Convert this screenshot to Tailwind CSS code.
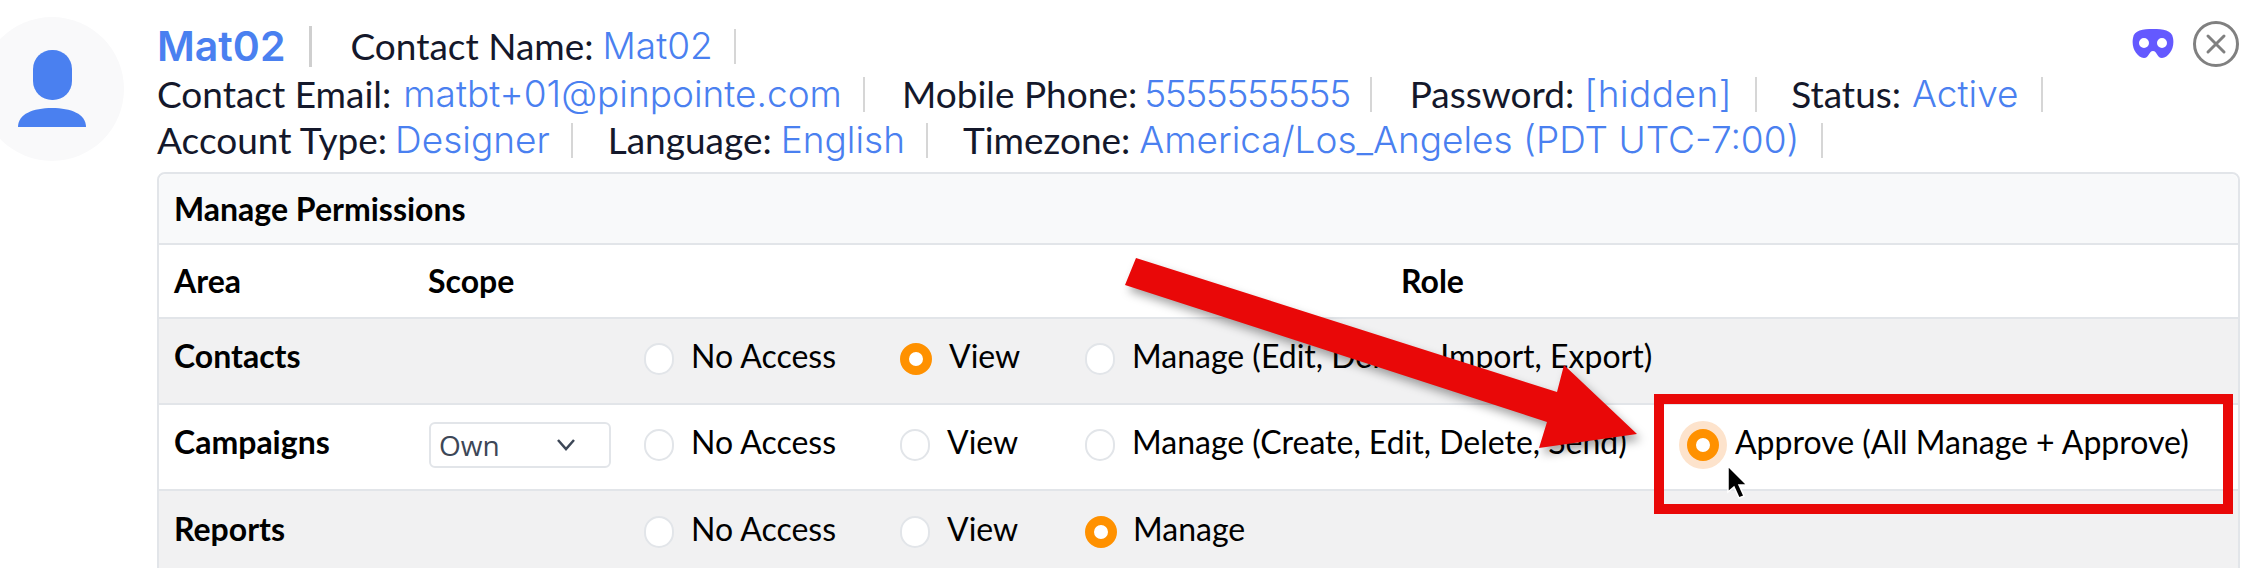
<!DOCTYPE html>
<html lang="en">
<head>
    <meta charset="UTF-8">
    <title>Manage Permissions</title>
    <script src="https://cdn.jsdelivr.net/npm/@tailwindcss/browser@4"></script>
</head>
<body class="relative w-[2254px] h-[568px] overflow-hidden bg-white font-['Lato',sans-serif] text-[#14182b]">
    <div class="flex">
        <!-- avatar -->
        <div class="w-[157px] shrink-0 relative">
            <div class="absolute left-[-20px] top-[17px] w-[144px] h-[144px] rounded-full bg-[#f9f9fa] flex items-center justify-center">
                <svg width="144" height="144" viewBox="0 0 144 144" fill="#4a80f0">
                    <rect x="53" y="33" width="39" height="50" rx="19"/>
                    <path d="M38 110c0-13 15-19 34-19s34 6 34 19z"/>
                </svg>
            </div>
        </div>

        <div class="w-[2083px]">
            <!-- contact details -->
            <div class="h-[172px] pt-[21px] text-[37px] leading-[46px]">
                <div class="flex items-center h-[50px]">
                    <span class="font-['Inter',sans-serif] font-semibold text-[41px] text-[#4a80f0]">Mat02</span>
                    <span class="w-[3px] h-[41px] bg-[#cfcfcf] ml-[24px] mr-[38px]"></span>
                    <span>Contact Name:</span>
                    <span class="ml-[9px] font-['Inter',sans-serif] font-light text-[#4a80f0]">Mat02</span>
                    <span class="w-[2px] h-[35px] bg-[#d6d6d6] ml-[21px]"></span>
                </div>
                <div class="flex items-center h-[46px]">
                    <span>Contact Email:</span>
                    <span class="ml-[12px] font-['Inter',sans-serif] font-light text-[#4a80f0]">matbt+01@pinpointe.com</span>
                    <span class="w-[2px] h-[35px] bg-[#d6d6d6] ml-[21px] mr-[37px]"></span>
                    <span>Mobile Phone:</span>
                    <span class="ml-[7px] font-['Inter',sans-serif] font-light tracking-[-1.4px] text-[#4a80f0]">5555555555</span>
                    <span class="w-[2px] h-[35px] bg-[#d6d6d6] ml-[20px] mr-[38px]"></span>
                    <span>Password:</span>
                    <span class="ml-[10px] font-['Inter',sans-serif] font-light tracking-[0.5px] text-[#4a80f0]">[hidden]</span>
                    <span class="w-[2px] h-[35px] bg-[#d6d6d6] ml-[23px] mr-[34px]"></span>
                    <span>Status:</span>
                    <span class="ml-[11px] font-['Inter',sans-serif] font-light text-[#4a80f0]">Active</span>
                    <span class="w-[2px] h-[35px] bg-[#d6d6d6] ml-[23px]"></span>
                </div>
                <div class="flex items-center h-[46px]">
                    <span>Account Type:</span>
                    <span class="ml-[8px] font-['Inter',sans-serif] font-light text-[#4a80f0]">Designer</span>
                    <span class="w-[2px] h-[35px] bg-[#d6d6d6] ml-[21px] mr-[35px]"></span>
                    <span>Language:</span>
                    <span class="ml-[9px] font-['Inter',sans-serif] font-light text-[#4a80f0]">English</span>
                    <span class="w-[2px] h-[35px] bg-[#d6d6d6] ml-[21px] mr-[35px]"></span>
                    <span>Timezone:</span>
                    <span class="ml-[9px] font-['Inter',sans-serif] font-light text-[#4a80f0]">America/Los_Angeles (PDT UTC-7:00)</span>
                    <span class="w-[2px] h-[35px] bg-[#d6d6d6] ml-[22px]"></span>
                </div>
            </div>

            <!-- permissions table -->
            <div class="border-2 border-[#e2e5e9] rounded-t-lg text-[32px] text-black">
                <div class="h-[71px] pl-[15px] flex items-center bg-[#f8f9fa] border-b-2 border-[#e2e5e9] rounded-t-lg font-bold">Manage Permissions</div>
                <div class="h-[74px] pl-[15px] flex items-center border-b-2 border-[#e2e5e9] font-bold">
                    <span class="w-[254px]">Area</span>
                    <span class="w-[199px]">Scope</span>
                    <span class="flex-1 text-center">Role</span>
                </div>

                <div class="h-[86px] pl-[15px] pb-[11px] flex items-center bg-[#f1f1f2] border-b-2 border-[#e2e5e9]">
                    <span class="w-[254px] font-bold">Contacts</span>
                    <span class="w-[216px]"></span>
                    <label class="w-[256px] flex items-center gap-[17px]"><span class="w-[30px] h-[32px] rounded-full bg-white border-2 border-[#e2e5e9] mt-[7px]"></span>No Access</label>
                    <label class="w-[185px] flex items-center gap-[17px]"><span class="w-[32px] h-[32px] rounded-full bg-white border-[9px] border-[#ff9100] mt-[7px]"></span>View</label>
                    <label class="flex items-center gap-[17px]"><span class="w-[30px] h-[32px] rounded-full bg-white border-2 border-[#e2e5e9] mt-[7px]"></span>Manage (Edit, Delete, Import, Export)</label>
                </div>

                <div class="h-[86px] pl-[15px] pb-[11px] flex items-center border-b-2 border-[#e2e5e9]">
                    <span class="w-[254px] font-bold">Campaigns</span>
                    <span class="w-[216px]">
                        <span class="w-[182px] h-[46px] mt-[7px] ml-[1px] pl-[8px] pr-[33px] flex items-center justify-between border-2 border-[#e2e5e9] rounded-md font-['Open_Sans',sans-serif] text-[28px] text-[#3d4757]">Own
                            <svg width="20" height="12" viewBox="0 0 20 12" fill="none" stroke="#3d4757" stroke-width="2.5"><path d="M2 1l8 9 8-9"/></svg>
                        </span>
                    </span>
                    <label class="w-[256px] flex items-center gap-[17px]"><span class="w-[30px] h-[32px] rounded-full bg-white border-2 border-[#e2e5e9] mt-[7px]"></span>No Access</label>
                    <label class="w-[185px] flex items-center gap-[17px]"><span class="w-[30px] h-[32px] rounded-full bg-white border-2 border-[#e2e5e9] mt-[7px]"></span>View</label>
                    <label class="w-[602px] flex items-center gap-[17px]"><span class="w-[30px] h-[32px] rounded-full bg-white border-2 border-[#e2e5e9] mt-[7px]"></span>Manage (Create, Edit, Delete, Send)</label>
                    <label class="flex items-center gap-[16px]"><span class="w-[32px] h-[32px] rounded-full bg-white border-[9px] border-[#ff9100] mt-[7px] shadow-[0_0_0_8px_#fde3cc]"></span>Approve (All Manage + Approve)</label>
                </div>

                <div class="h-[86px] pl-[15px] pb-[11px] flex items-center bg-[#f1f1f2]">
                    <span class="w-[254px] font-bold">Reports</span>
                    <span class="w-[216px]"></span>
                    <label class="w-[256px] flex items-center gap-[17px]"><span class="w-[30px] h-[32px] rounded-full bg-white border-2 border-[#e2e5e9] mt-[7px]"></span>No Access</label>
                    <label class="w-[185px] flex items-center gap-[17px]"><span class="w-[30px] h-[32px] rounded-full bg-white border-2 border-[#e2e5e9] mt-[7px]"></span>View</label>
                    <label class="flex items-center gap-[16px]"><span class="w-[32px] h-[32px] rounded-full bg-white border-[9px] border-[#ff9100] mt-[7px]"></span>Manage</label>
                </div>
            </div>
        </div>
    </div>

    <!-- mask + close icons -->
    <svg class="absolute left-[2132px] top-[29px]" width="42" height="29" viewBox="0 0 42 29" fill="#6459ff">
        <path fill-rule="evenodd" d="M21 0c10 0 19 1 20 9 2 10-4 19-11 20-5 0-5-7-9-7s-4 7-9 7C5 28-1 19 1 9 2 1 11 0 21 0zM12 9a5 5 0 1 0 0 10 5 5 0 0 0 0-10zm18 0a5 5 0 1 0 0 10 5 5 0 0 0 0-10z"/>
    </svg>
    <svg class="absolute left-[2192px] top-[20px]" width="48" height="48" viewBox="0 0 48 48" fill="none" stroke="#808080">
        <circle cx="24" cy="24" r="21.5" stroke-width="3"/>
        <path d="M16 16l16 16M32 16L16 32" stroke-width="3" stroke-linecap="round"/>
    </svg>

    <!-- annotation: arrow, box, cursor -->
    <svg class="absolute left-0 top-0 drop-shadow-[4px_6px_5px_rgba(0,0,0,0.35)]" width="2254" height="568" fill="#e90808">
        <polygon points="1136,258 1125,285 1547,422 1539,448 1637,434 1564,365 1557,392"/>
    </svg>
    <div class="absolute left-[1654px] top-[394px] w-[579px] h-[120px] border-[10px] border-[#e90808]"></div>
    <svg class="absolute left-[1726px] top-[464px]" width="24" height="36" viewBox="0 0 24 36">
        <path d="M2 2v26l6-5 5 11 5-2-5-11h8z" fill="#000" stroke="#fff" stroke-width="1.5"/>
    </svg>
</body>
</html>
